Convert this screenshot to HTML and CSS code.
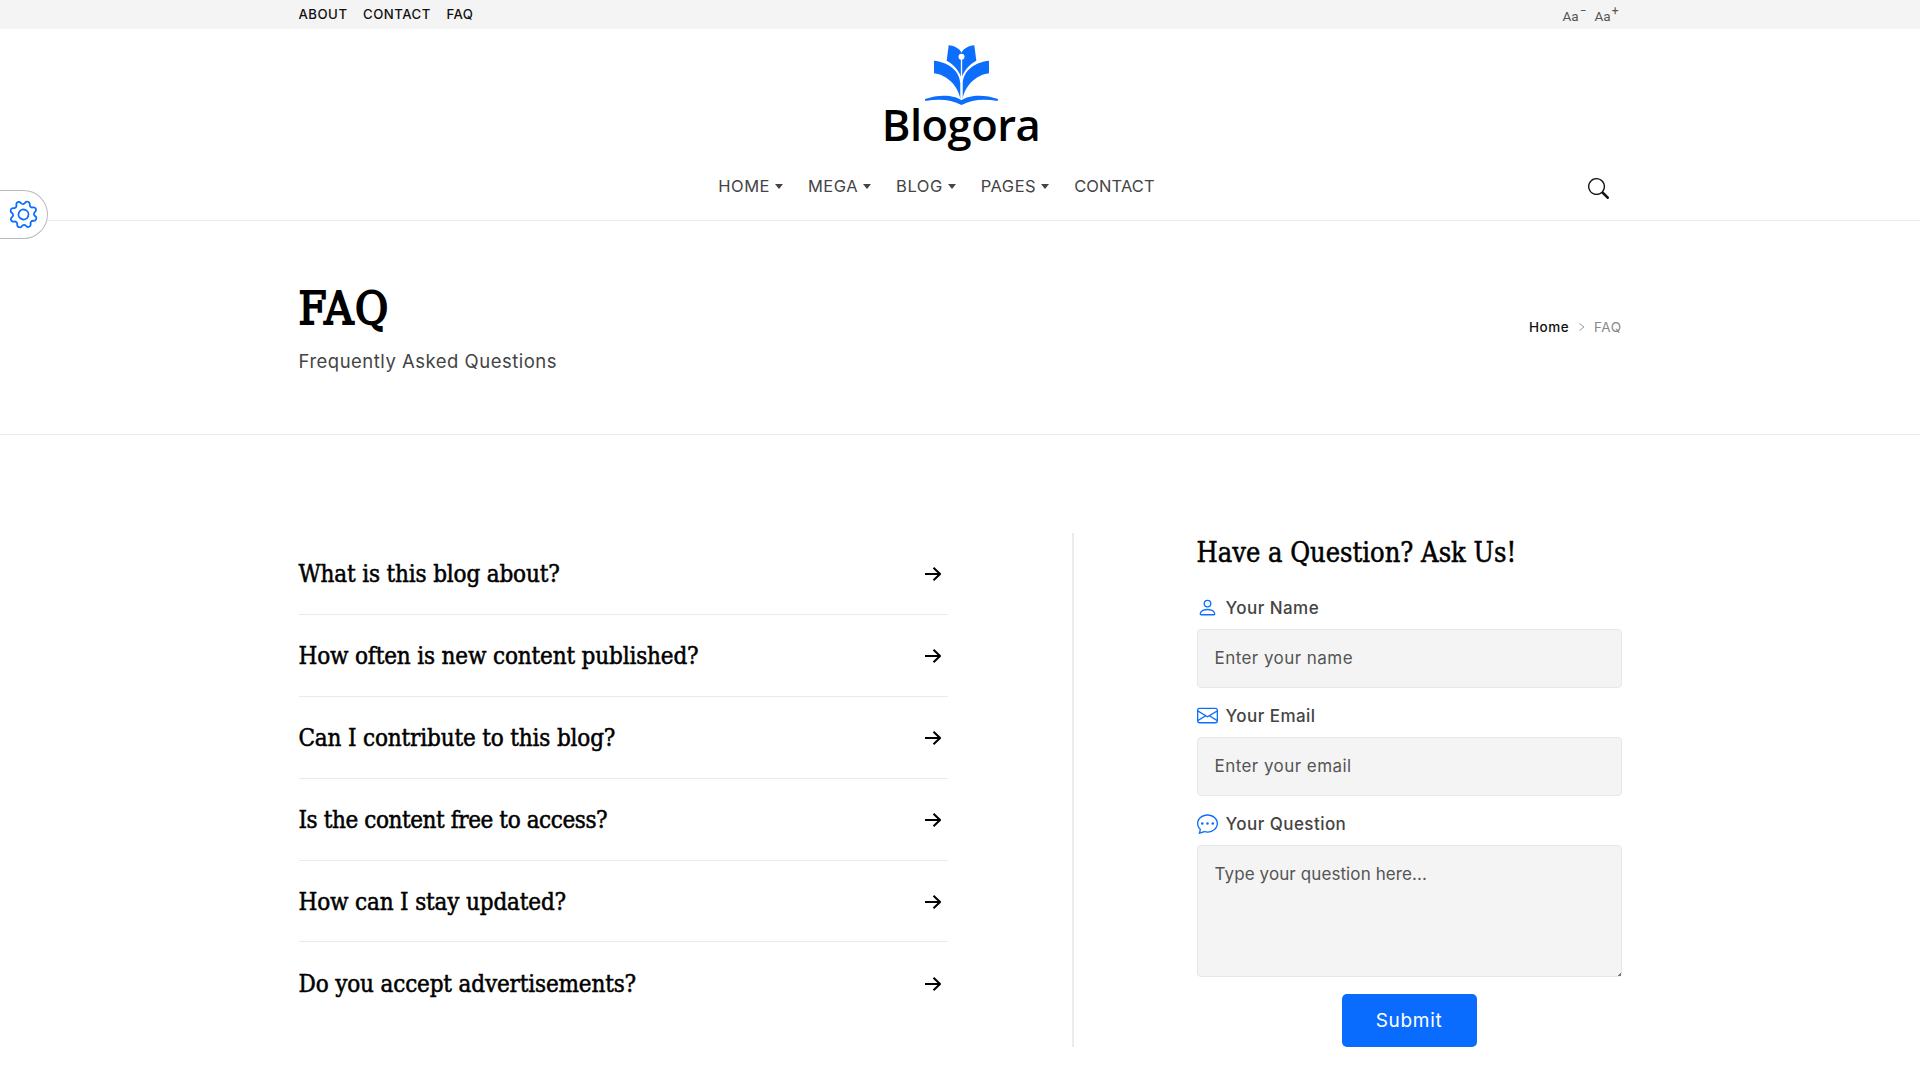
FILE: index.html
```html
<!DOCTYPE html>
<html lang="en">
<head>
  <meta charset="utf-8">
  <title>Blogora - FAQ</title>
  <link rel="stylesheet" href="styles.css">
</head>
<body>
  <div class="topbar">
    <div class="container topbar-inner">
      <nav class="top-links">
        <a href="#">ABOUT</a>
        <a href="#">CONTACT</a>
        <a href="#">FAQ</a>
      </nav>
      <div class="font-size">
        <span>Aa<sup>−</sup></span>
        <span>Aa<sup>+</sup></span>
      </div>
    </div>
  </div>

  <header class="header">
    <a class="logo" href="#">
      <svg width="73" height="60" viewBox="195 45 219 180" fill="#0d6efd">
        <path d="M195 207C235 192 284 194 304.500 211C325 194 374 192 414 207L413 213C375 206 336 207 304.500 225C273 207 234 206 196 213Z"/>
        <path d="M222 92C262 96 298 119 301 160V206C294 168 262 135 222 130Z"/>
        <path d="M387 92C347 96 311 119 308 160V206C315 168 347 135 387 130Z"/>
        <path d="M266 46C284 48 299 56 304.500 68C310 56 325 48 343 46L349 92C328 103 310 124 304.500 145C299 124 281 103 260 92Z"/>
        <path d="M304.500 80V200" stroke="#fff" stroke-width="4"/>
        <circle cx="304.500" cy="80" r="9" fill="#fff"/>
      </svg>
      <span class="logo-text">Blogora</span>
    </a>
    <div class="container nav-row">
      <nav class="main-nav">
        <a class="dropdown" href="#">HOME</a>
        <a class="dropdown" href="#">MEGA</a>
        <a class="dropdown" href="#">BLOG</a>
        <a class="dropdown" href="#">PAGES</a>
        <a href="#">CONTACT</a>
      </nav>
      <button class="search" type="button" aria-label="Search">
        <svg width="21" height="21" viewBox="0 0 16 16" fill="currentColor">
          <path d="M11.742 10.344a6.500 6.500 0 1 0-1.397 1.398h-.001q.044.060.098.115l3.850 3.850a1 1 0 0 0 1.415-1.414l-3.850-3.850a1 1 0 0 0-.115-.100zM12 6.500a5.500 5.500 0 1 1-11 0 5.500 5.500 0 0 1 11 0"/>
        </svg>
      </button>
    </div>
  </header>

  <!-- Theme settings tab stuck to the left edge -->
  <button class="settings" type="button" aria-label="Settings">
    <svg width="29" height="29" viewBox="0 0 16 16" fill="currentColor">
      <path d="M8 4.754a3.246 3.246 0 1 0 0 6.492 3.246 3.246 0 0 0 0-6.492M5.754 8a2.246 2.246 0 1 1 4.492 0 2.246 2.246 0 0 1-4.492 0"/>
      <path d="M9.796 1.343c-.527-1.790-3.065-1.790-3.592 0l-.094.319a.873.873 0 0 1-1.255.520l-.292-.160c-1.640-.892-3.433.902-2.540 2.541l.159.292a.873.873 0 0 1-.520 1.255l-.319.094c-1.790.527-1.790 3.065 0 3.592l.319.094a.873.873 0 0 1 .520 1.255l-.160.292c-.892 1.640.901 3.434 2.541 2.540l.292-.159a.873.873 0 0 1 1.255.520l.094.319c.527 1.790 3.065 1.790 3.592 0l.094-.319a.873.873 0 0 1 1.255-.520l.292.160c1.640.893 3.434-.902 2.540-2.541l-.159-.292a.873.873 0 0 1 .520-1.255l.319-.094c1.790-.527 1.790-3.065 0-3.592l-.319-.094a.873.873 0 0 1-.520-1.255l.160-.292c.893-1.640-.902-3.433-2.541-2.540l-.292.159a.873.873 0 0 1-1.255-.520zm-2.633.283c.246-.835 1.428-.835 1.674 0l.094.319a1.873 1.873 0 0 0 2.693 1.115l.291-.160c.764-.415 1.600.420 1.184 1.185l-.159.292a1.873 1.873 0 0 0 1.116 2.692l.318.094c.835.246.835 1.428 0 1.674l-.319.094a1.873 1.873 0 0 0-1.115 2.693l.160.291c.415.764-.420 1.600-1.185 1.184l-.291-.159a1.873 1.873 0 0 0-2.693 1.116l-.094.318c-.246.835-1.428.835-1.674 0l-.094-.319a1.873 1.873 0 0 0-2.692-1.115l-.292.160c-.764.415-1.600-.420-1.184-1.185l.159-.291A1.873 1.873 0 0 0 1.945 8.930l-.319-.094c-.835-.246-.835-1.428 0-1.674l.319-.094A1.873 1.873 0 0 0 3.060 4.377l-.160-.292c-.415-.764.420-1.600 1.185-1.184l.292.159a1.873 1.873 0 0 0 2.692-1.115z"/>
    </svg>
  </button>

  <section class="page-title">
    <div class="container page-title-inner">
      <div>
        <h1>FAQ</h1>
        <p>Frequently Asked Questions</p>
      </div>
      <nav class="breadcrumb">
        <a href="#">Home</a>
        <svg width="6" height="8" viewBox="0 0 6 8" fill="none" stroke="#999"><path d="M.5.5L5 4L.5 7.500"/></svg>
        <span>FAQ</span>
      </nav>
    </div>
  </section>

  <main class="container content">
    <div class="faq-list">
      <div class="faq-item">What is this blog about?
        <svg class="arrow" viewBox="0 0 16 14"><path d="M0 7H15M8.500.7L15 7L8.500 13.300"/></svg></div>
      <div class="faq-item">How often is new content published?
        <svg class="arrow" viewBox="0 0 16 14"><path d="M0 7H15M8.500.7L15 7L8.500 13.300"/></svg></div>
      <div class="faq-item">Can I contribute to this blog?
        <svg class="arrow" viewBox="0 0 16 14"><path d="M0 7H15M8.500.7L15 7L8.500 13.300"/></svg></div>
      <div class="faq-item tight">Is the content free to access?
        <svg class="arrow" viewBox="0 0 16 14"><path d="M0 7H15M8.500.7L15 7L8.500 13.300"/></svg></div>
      <div class="faq-item">How can I stay updated?
        <svg class="arrow" viewBox="0 0 16 14"><path d="M0 7H15M8.500.7L15 7L8.500 13.300"/></svg></div>
      <div class="faq-item">Do you accept advertisements?
        <svg class="arrow" viewBox="0 0 16 14"><path d="M0 7H15M8.500.7L15 7L8.500 13.300"/></svg></div>
    </div>

    <form class="ask">
      <h2>Have a Question? Ask Us!</h2>

      <label for="name">
        <svg width="21" height="21" viewBox="0 0 16 16" fill="currentColor">
          <path d="M8 8a3 3 0 1 0 0-6 3 3 0 0 0 0 6m2-3a2 2 0 1 1-4 0 2 2 0 0 1 4 0m4 8c0 1-1 1-1 1H3s-1 0-1-1 1-4 6-4 6 3 6 4m-1-.004c-.001-.246-.154-.986-.832-1.664C11.516 10.680 10.289 10 8 10s-3.516.680-4.168 1.332c-.678.678-.830 1.418-.832 1.664z"/>
        </svg>
        Your Name
      </label>
      <input type="text" id="name" placeholder="Enter your name">

      <label for="email">
        <svg width="21" height="21" viewBox="0 0 16 16" fill="currentColor">
          <path d="M0 4a2 2 0 0 1 2-2h12a2 2 0 0 1 2 2v8a2 2 0 0 1-2 2H2a2 2 0 0 1-2-2zm2-1a1 1 0 0 0-1 1v.217l7 4.200 7-4.200V4a1 1 0 0 0-1-1zm13 2.383-4.708 2.825L15 11.105zm-.034 6.876-5.640-3.471L8 9.583l-1.326-.795-5.640 3.470A1 1 0 0 0 2 13h12a1 1 0 0 0 .966-.741M1 11.105l4.708-2.897L1 5.383z"/>
        </svg>
        Your Email
      </label>
      <input type="email" id="email" placeholder="Enter your email">

      <label for="question">
        <svg width="21" height="21" viewBox="0 0 16 16" fill="currentColor">
          <path d="M5 8a1 1 0 1 1-2 0 1 1 0 0 1 2 0m4 0a1 1 0 1 1-2 0 1 1 0 0 1 2 0m3 1a1 1 0 1 0 0-2 1 1 0 0 0 0 2"/>
          <path d="m2.165 15.803.020-.004c1.830-.363 2.948-.842 3.468-1.105A9 9 0 0 0 8 15c4.418 0 8-3.134 8-7s-3.582-7-8-7-8 3.134-8 7c0 1.760.743 3.370 1.970 4.600a10.400 10.400 0 0 1-.524 2.318l-.003.011a11 11 0 0 1-.244.637c-.079.186.074.394.273.362a22 22 0 0 0 .693-.125m.800-3.108a1 1 0 0 0-.287-.801C1.618 10.830 1 9.468 1 8c0-3.192 3.004-6 7-6s7 2.808 7 6-3.004 6-7 6a8 8 0 0 1-2.088-.272 1 1 0 0 0-.711.074c-.387.196-1.240.570-2.634.893a11 11 0 0 0 .398-2"/>
        </svg>
        Your Question
      </label>
      <textarea id="question" placeholder="Type your question here..."></textarea>

      <button type="submit">Submit</button>
    </form>
  </main>
</body>
</html>
```
FILE: styles.css
```css
* {
  box-sizing: border-box;
}

body {
  margin: 0;
  background-color: #fff;
  color: #444;
  font-family: Inter, sans-serif;
}

a {
  color: inherit;
  text-decoration: none;
}

.container {
  width: 1323px;
  margin: 0 auto;
}

/* Top bar */
.topbar {
  height: 29px;
  background-color: #f4f4f4;
}

.topbar-inner {
  display: flex;
  justify-content: space-between;
  align-items: center;
  height: 28px;
}

.top-links {
  display: flex;
  gap: 15.5px;
  color: #111;
  font-size: 13.2px;
  font-weight: 500;
  letter-spacing: 0.5px;
}

.font-size {
  display: flex;
  gap: 8px;
  padding: 3px 3px 0 0;
  color: #555;
  font-family: Roboto, sans-serif;
  font-size: 13.5px;
  line-height: 20px;
}

.font-size sup {
  margin-left: 1px;
  font-size: 12px;
  line-height: 0;
}

/* Header */
.header {
  height: 192px;
  padding-top: 16px;
  border-bottom: 1px solid #e6eaeb;
}

.logo {
  display: flex;
  flex-direction: column;
  align-items: center;
  height: 108px;
  padding-left: 2px;
}

.logo-text {
  color: #000;
  font-family: "Open Sans", sans-serif;
  font-size: 43.5px;
  font-weight: 600;
  line-height: 40px;
  letter-spacing: -0.5px;
}

.nav-row {
  display: flex;
  align-items: center;
  height: 66px;
}

.main-nav {
  flex: 1;
  display: flex;
  justify-content: center;
  gap: 25px;
  font-size: 16.5px;
  letter-spacing: 0.5px;
}

.main-nav a:last-child {
  letter-spacing: 0.1px;
}

.dropdown::after {
  content: "";
  display: inline-block;
  margin-left: 5px;
  vertical-align: 3px;
  border-top: 5px solid;
  border-left: 4.5px solid transparent;
  border-right: 4.5px solid transparent;
}

.search {
  width: 47px;
  height: 25px;
  padding: 4px 13px 0;
  border: none;
  background: none;
  color: #111;
}

.search svg {
  display: block;
}

.settings {
  position: fixed;
  top: 190px;
  left: 0;
  display: flex;
  align-items: center;
  width: 48px;
  height: 49px;
  padding: 0 0 0 9px;
  border: 1px solid #bbb;
  border-left: none;
  border-radius: 0 25px 25px 0;
  background-color: #fff;
  color: #0d6efd;
}

.settings svg {
  transform: rotate(20deg);
}

/* Page title */
.page-title {
  height: 214px;
  border-bottom: 1px solid #e6eaeb;
}

.page-title-inner {
  display: flex;
  justify-content: space-between;
  padding-top: 65px;
}

h1,
h2,
.faq-item {
  color: #000;
  font-family: "DejaVu Serif Condensed", "DejaVu Serif", serif;
  font-weight: 400;
}

h1 {
  margin: 0 0 17px;
  font-size: 45px;
  line-height: 45px;
  letter-spacing: 1.5px;
  -webkit-text-stroke: 1.8px #000;
}

.page-title p {
  margin: 0;
  font-size: 18.5px;
  line-height: 27px;
  letter-spacing: 0.5px;
}

.breadcrumb {
  display: flex;
  align-items: center;
  gap: 9.5px;
  height: 20px;
  margin-top: 31px;
  color: #888;
  font-size: 13.5px;
  letter-spacing: 0.5px;
}

.breadcrumb a {
  color: #111;
  font-weight: 500;
}

/* Content */
.content {
  display: flex;
  justify-content: space-between;
  height: 514px;
  margin-top: 98px;
}

.faq-list {
  width: 649px;
}

.faq-item {
  display: flex;
  justify-content: space-between;
  align-items: center;
  height: 81.9px;
  padding: 2px 7px 0 0;
  border-bottom: 1px solid #e8eaeb;
  font-size: 24px;
  letter-spacing: -0.16px;
  -webkit-text-stroke: 0.5px #000;
}

.faq-item.tight {
  letter-spacing: -0.42px;
}

.faq-item:last-child {
  border-bottom: none;
}

.arrow {
  width: 16px;
  height: 14px;
  fill: none;
  stroke: #000;
  stroke-width: 2;
}

.ask {
  width: 550px;
  padding-left: 123px;
  border-left: 2px solid #ebebeb;
}

h2 {
  margin: 0 0 24px;
  font-size: 27px;
  line-height: 40px;
  white-space: nowrap;
  -webkit-text-stroke: 0.5px #000;
}

label {
  display: flex;
  align-items: center;
  gap: 8px;
  height: 21px;
  margin-bottom: 11px;
  font-size: 17px;
  font-weight: 500;
  letter-spacing: 0.45px;
}

label svg {
  color: #0d6efd;
}

input,
textarea {
  display: block;
  width: 100%;
  padding: 15px 17px;
  border: 1px solid #e4e8ea;
  border-radius: 4px;
  background-color: #f4f4f4;
  font-family: Inter, sans-serif;
  font-size: 17px;
  line-height: 26px;
  letter-spacing: 0.45px;
}

input {
  height: 59px;
  padding: 14px 17px 16px;
  margin-bottom: 17.2px;
}

textarea {
  height: 132px;
  margin-bottom: 17px;
  letter-spacing: 0.1px;
}

textarea::-webkit-resizer {
  background: linear-gradient(135deg, transparent 88%, #777 88%);
}

::placeholder {
  color: #555;
}

.ask button {
  display: block;
  width: 135px;
  height: 53px;
  margin: 0 auto;
  border: none;
  border-radius: 5px;
  background-color: #0a6cff;
  color: #fff;
  font-family: Inter, sans-serif;
  font-size: 19px;
  letter-spacing: 0.7px;
}
```
